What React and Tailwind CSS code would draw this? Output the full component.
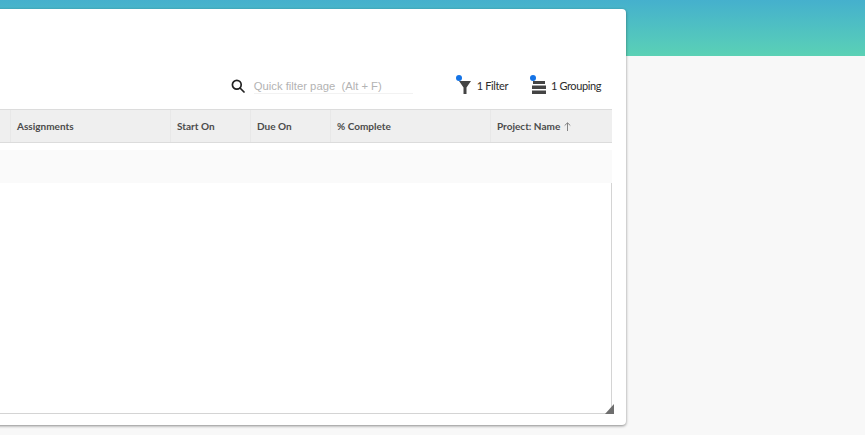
const cols = [
  { label: "", w: "w-[11px]" },
  { label: "Assignments", w: "w-[160px]" },
  { label: "Start On", w: "w-[80px]" },
  { label: "Due On", w: "w-[80px]" },
  { label: "% Complete", w: "w-[160px]" },
];

export default function App() {
  return (
    <div className="h-[435px] w-[865px] overflow-hidden bg-[#f8f8f8] font-['Lato',sans-serif]">
      <div className="h-[56px] bg-gradient-to-b from-[#45b0cd] to-[#5bd1b5]" />
      <div className="mt-[-47px] ml-[-20px] flex h-[416px] w-[646px] flex-col rounded-r-[4px] bg-white pl-[20px] shadow-[0_1px_3px_rgba(0,0,0,0.45)]">
        <div className="flex h-[100px] items-end justify-end pb-[15px] pr-[25px]">
          <svg width="14" height="14" viewBox="0 0 14 14" className="mb-[1px] mr-[9px]" fill="none" stroke="#222" strokeWidth="1.7">
            <circle cx="5.8" cy="5.8" r="4.4" />
            <path d="M9 9l4 4" strokeLinecap="round" />
          </svg>
          <div className="mr-[46px] w-[159px] border-b border-[#f2f2f2] font-['Liberation_Sans',sans-serif] text-[11.25px] leading-[14px] text-[#b3b3b3] whitespace-pre">
            Quick filter page  (Alt + F)
          </div>
          <div className="relative mr-[24px] flex items-center">
            <span className="absolute left-[-3px] top-[-4px] h-[6px] w-[6px] rounded-full bg-[#1473e6]" />
            <svg width="12" height="14" viewBox="0 0 12 14" className="mr-[6px]" fill="#444">
              <path d="M0 1h12L7.5 7.5V14H4.5V7.5z" />
            </svg>
            <span className="mb-[1px] text-[11px] leading-[14px] text-[#2c2c2c] tracking-[-0.4px]">1 Filter</span>
          </div>
          <div className="relative flex items-center">
            <span className="absolute left-[-2px] top-[-4px] h-[6px] w-[6px] rounded-full bg-[#1473e6]" />
            <svg width="14" height="14" viewBox="0 0 14 14" className="mr-[5px]" fill="#444">
              <rect x="1" y="1" width="12" height="3" />
              <rect y="5.5" width="14" height="3.5" />
              <rect y="10.5" width="14" height="3.5" />
            </svg>
            <span className="mb-[1px] text-[11px] leading-[14px] text-[#2c2c2c] tracking-[-0.4px]">1 Grouping</span>
          </div>
        </div>
        <div className="flex w-[612px] flex-1 flex-col">
          <div className="flex h-[34px] items-stretch border-y border-[#dcdcdc] bg-[#efefef]">
            {cols.map((c) => (
              <div
                key={c.label}
                className={`${c.w} flex items-center border-r border-[#e8e8e8] pl-[6px] text-[10px] font-bold text-[#4b4b4b]`}
              >
                {c.label}
              </div>
            ))}
            <div className="flex flex-1 items-center gap-[4px] pl-[6px] text-[10px] font-bold text-[#4b4b4b]">
              Project: Name
              <svg width="7" height="9" viewBox="0 0 7 9" fill="none" stroke="#777" strokeWidth="0.9">
                <path d="M3.5 9V1M0.7 3.5L3.5 0.8l2.8 2.7" />
              </svg>
            </div>
          </div>
          <div className="mt-[7px] h-[33px] bg-[#fafafa]" />
          <div className="relative h-[231px] border-b border-r border-[#d4d4d4]">
            <svg width="10" height="10" viewBox="0 0 10 10" className="absolute bottom-[-1px] right-[-4px]" fill="#6e6e6e">
              <path d="M9 0v10H0z" />
            </svg>
          </div>
        </div>
      </div>
    </div>
  );
}
